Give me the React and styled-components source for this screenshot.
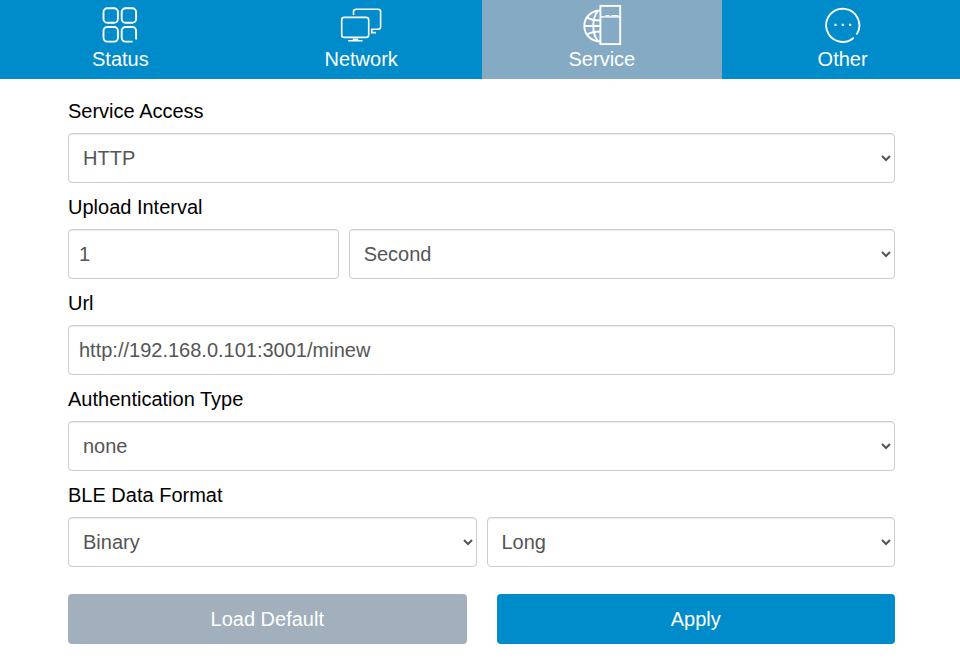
import React from "react";
import styled, { createGlobalStyle } from "styled-components";

const GlobalStyle = createGlobalStyle`
  *, *::before, *::after { box-sizing: border-box; }
  html { overflow: hidden; }
  body {
    margin: 0;
    background: #fff;
    color: #000;
    font-family: "Liberation Sans", Arial, sans-serif;
    font-size: 20px;
    line-height: 28px;
  }
`;

const Page = styled.div`
  width: 963px;
`;

const Nav = styled.nav`
  display: grid;
  grid-template-columns: repeat(4, 1fr);
  height: 79px;
  background: #008bca;
`;

const Tab = styled.a`
  display: flex;
  flex-direction: column;
  align-items: center;
  padding-top: 5px;
  color: #fff;
  background: ${(p) => (p.$active ? "#84aac4" : "transparent")};
`;

const Icon = styled.svg`
  display: block;
  width: 40px;
  height: 40px;
  fill: none;
  stroke: #fff;
  stroke-width: 1.9;
  overflow: visible;
`;

const Form = styled.form`
  display: flex;
  flex-direction: column;
  padding: 18px 68px 0;
`;

const Field = styled.div`
  height: 96px;
`;

const Label = styled.label`
  display: block;
  height: 36px;
  line-height: 28px;
`;

const Controls = styled.div`
  display: grid;
  grid-template-columns: ${(p) => p.$columns || "1fr"};
  gap: 10px;
`;

const Input = styled.input`
  width: 100%;
  min-width: 0;
  height: 50px;
  margin: 0;
  padding: 6px 10px;
  border: 1px solid #ccc;
  border-radius: 4px;
  background: #fff;
  box-shadow: inset 0 1px 1px rgba(0, 0, 0, 0.075);
  color: #555;
  font: inherit;
`;

const Select = styled(Input).attrs({ as: "select" })``;

const Actions = styled.div`
  display: grid;
  grid-template-columns: 1fr 1fr;
  gap: 30px;
  margin-top: 17px;
`;

const Button = styled.button`
  height: 50px;
  padding: 0;
  border: 0;
  border-radius: 4px;
  color: #fff;
  background: ${(p) => (p.$primary ? "#008bca" : "#a2afbd")};
  font: inherit;
`;

const StatusIcon = () => (
  <Icon viewBox="0 0 40 40">
    <rect x="3.5" y="3.2" width="14.4" height="14.6" rx="3.8" />
    <rect x="21.7" y="3.2" width="14.4" height="14.6" rx="3.8" />
    <rect x="3.5" y="22" width="14.4" height="14.6" rx="3.8" />
    <path d="M32.6 36.6h-7.1a3.8 3.8 0 0 1-3.8-3.8v-7a3.8 3.8 0 0 1 3.8-3.8h6.8a3.8 3.8 0 0 1 3.8 3.8v8.6" />
  </Icon>
);

const NetworkIcon = () => (
  <Icon viewBox="0 0 40 40">
    <g strokeWidth="1.6">
      <rect x=".7" y="12.4" width="27" height="20" rx="2.5" />
      <path d="M12.5 10V6.7a2.5 2.5 0 0 1 2.5-2.5h22.1a2.5 2.5 0 0 1 2.5 2.5v15a2.5 2.5 0 0 1-2.5 2.5h-6.4v3.4h4.2" />
      <path d="M7.2 35.8h14.4M11.8 34.4h5.4" />
    </g>
  </Icon>
);

const ServiceIcon = () => (
  <Icon viewBox="0 0 40 40">
    <rect x="18.4" y=".9" width="19.8" height="38.2" />
    <path d="M18.4 11.9h19.8" strokeWidth="1.4" />
    <path d="M23.5 10.5h4M29.4 10.5h7" strokeWidth="1" />
    <path d="M18.4 5.5C9.2 5.5 2.3 12.4 2.3 21S9.2 36.5 18.4 36.5" />
    <path d="M15.8 6.2C9.8 13 9.8 29 15.8 35.8" />
    <path d="M5.2 12.6c4 2.4 8.5 2.9 13.2 2.9M2.4 21h16M5.2 29.4c4-2.4 8.5-2.9 13.2-2.9" />
  </Icon>
);

const OtherIcon = () => (
  <Icon viewBox="0 0 40 40">
    <path d="M30.2 33.2A16.6 16.6 0 1 1 34 28.8" strokeLinecap="round" />
    <path d="M11.4 19.8h2.2M18.7 19.8h2.2M26 19.8h2.2" strokeWidth="2.2" />
  </Icon>
);

const tabs = [
  { name: "Status", Glyph: StatusIcon },
  { name: "Network", Glyph: NetworkIcon },
  { name: "Service", Glyph: ServiceIcon, active: true },
  { name: "Other", Glyph: OtherIcon },
];

export default function App() {
  return (
    <Page>
      <GlobalStyle />
      <Nav>
        {tabs.map(({ name, Glyph, active }) => (
          <Tab key={name} $active={active}>
            <Glyph />
            <span>{name}</span>
          </Tab>
        ))}
      </Nav>
      <Form>
        <Field>
          <Label>Service Access</Label>
          <Controls>
            <Select><option>HTTP</option></Select>
          </Controls>
        </Field>
        <Field>
          <Label>Upload Interval</Label>
          <Controls $columns="270.66px 1fr">
            <Input defaultValue="1" />
            <Select><option>Second</option></Select>
          </Controls>
        </Field>
        <Field>
          <Label>Url</Label>
          <Controls>
            <Input defaultValue="http://192.168.0.101:3001/minew" />
          </Controls>
        </Field>
        <Field>
          <Label>Authentication Type</Label>
          <Controls>
            <Select><option>none</option></Select>
          </Controls>
        </Field>
        <Field>
          <Label>BLE Data Format</Label>
          <Controls $columns="1fr 1fr">
            <Select><option>Binary</option></Select>
            <Select><option>Long</option></Select>
          </Controls>
        </Field>
        <Actions>
          <Button type="button">Load Default</Button>
          <Button type="button" $primary>Apply</Button>
        </Actions>
      </Form>
    </Page>
  );
}
